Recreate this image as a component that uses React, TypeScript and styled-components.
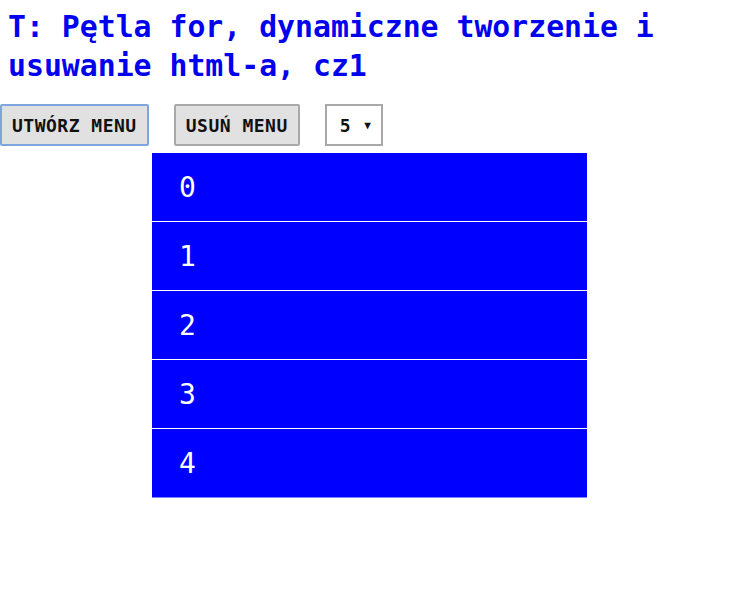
import styled, { createGlobalStyle } from 'styled-components';

const GlobalStyle = createGlobalStyle`
  html, body {
    margin: 0;
    padding: 0;
    background: #fff;
  }
  body {
    font-family: "DejaVu Sans Mono", "Liberation Mono", monospace;
  }
`;

const items = [0, 1, 2, 3, 4];

const App = () => {
  return (
    <Page>
      <GlobalStyle />
      <Title>T: Pętla for, dynamiczne tworzenie i usuwanie html-a, cz1</Title>
      <Toolbar>
        <Button $focused>UTWÓRZ MENU</Button>
        <Button>USUŃ MENU</Button>
        <Select>
          <span>5</span>
          <Arrow>▼</Arrow>
        </Select>
      </Toolbar>
      <Menu>
        {items.map((n) => (
          <Item key={n}>{n}</Item>
        ))}
      </Menu>
    </Page>
  );
};

export default App;

const Page = styled.div`
  display: flex;
  flex-direction: column;
  width: 729px;
`;

const Title = styled.h1`
  margin: 0;
  padding: 7px 8px 0;
  font-size: 29.8px;
  line-height: 39px;
  font-weight: 700;
  color: #0000ee;
  max-width: 670px;
`;

const Toolbar = styled.div`
  display: flex;
  align-items: center;
  gap: 25px;
  margin-top: 19px;
`;

const Button = styled.button<{ $focused?: boolean }>`
  height: 42px;
  padding: 0 10px;
  font-family: "DejaVu Sans Mono", monospace;
  font-size: 18px;
  font-weight: 700;
  color: #111;
  background: #e1e1e1;
  border: 2px solid ${({ $focused }) => ($focused ? '#7ea6de' : '#a9a9a9')};
  border-radius: 2px;
  letter-spacing: 0.5px;
`;

const Select = styled.div`
  display: flex;
  align-items: center;
  justify-content: space-between;
  box-sizing: border-box;
  width: 58px;
  height: 42px;
  padding: 0 10px 0 13px;
  border: 2px solid #a9a9a9;
  background: #fff;
  font-size: 18px;
  font-weight: 700;
  color: #111;
`;

const Arrow = styled.span`
  font-size: 11px;
  color: #111;
`;

const Menu = styled.ul`
  list-style: none;
  margin: 7px 0 0 152px;
  padding: 0;
  width: 435px;
`;

const Item = styled.li`
  box-sizing: border-box;
  height: 69px;
  display: flex;
  align-items: center;
  padding-left: 27px;
  background: #0000ff;
  color: #fff;
  font-size: 28px;
  border-bottom: 1px solid #fff;
  &:last-child {
    border-bottom: 1px solid #8080ff;
  }
`;
